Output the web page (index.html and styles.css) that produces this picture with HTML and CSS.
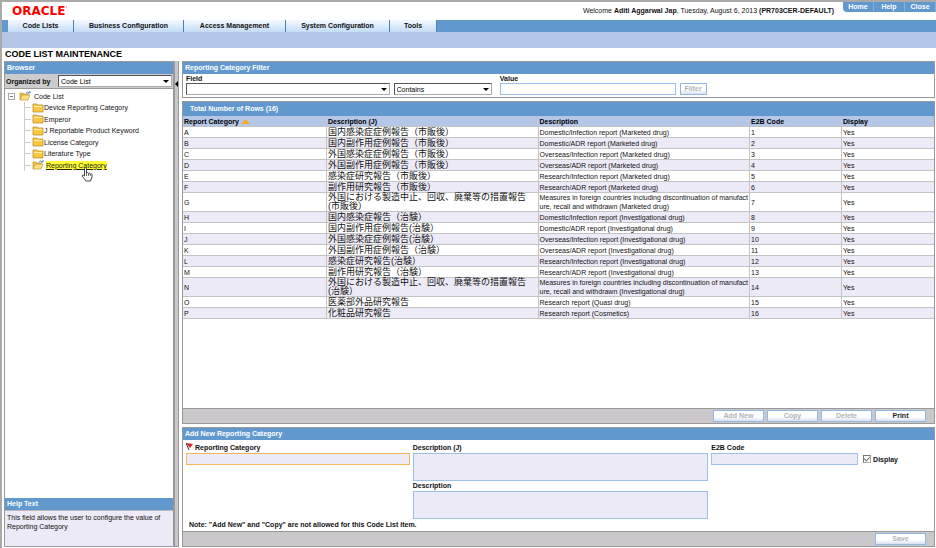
FILE: index.html
```
<!DOCTYPE html>
<html lang="en">
<head>
    <meta charset="UTF-8">
    <title>Code List Maintenance</title>
    <link rel="stylesheet" href="styles.css">
</head>
<body>
    <header class="top">
        <div class="logo">ORACLE<sup>&#39;</sup></div>
        <p class="welcome">Welcome <b>Aditi Aggarwal Jap</b>, Tuesday, August 6, 2013 <b>(PR703CER-DEFAULT)</b></p>
        <nav class="links">
            <a href="#">Home</a>
            <a href="#">Help</a>
            <a href="#">Close</a>
        </nav>
    </header>

    <nav class="menu">
        <a class="m1" href="#">Code Lists</a>
        <a class="m2" href="#">Business Configuration</a>
        <a class="m3" href="#">Access Management</a>
        <a class="m4" href="#">System Configuration</a>
        <a class="m5" href="#">Tools</a>
    </nav>
    <div class="submenu"></div>

    <h1>CODE LIST MAINTENANCE</h1>

    <div class="main">
        <aside class="browser">
            <h2>Browser</h2>
            <div class="organized">
                <label for="organized">Organized by</label>
                <span class="select"><select id="organized"><option>Code List</option></select></span>
            </div>
            <div class="tree">
                <div class="root">
                    <span class="minus"></span>
                    <svg class="folder" viewBox="0 0 12 10"><path d="M1 9V2h3l1 1h4v2" fill="#f3c04a" stroke="#b98a25" stroke-width=".6"/><path d="M1 9l2-5h8L9 9z" fill="#ffdf7e" stroke="#b98a25" stroke-width=".6"/><path d="M7 2q2-2 3 0M9 2h2V0" fill="none" stroke="#5486bd"/></svg>
                    Code List
                </div>
                <ul>
                    <li><svg class="folder" viewBox="0 0 12 10"><path d="M1 1h4l1 1h5v7H1z" fill="#fbc83f" stroke="#b5842a" stroke-width=".7"/><path d="M2 3.500h8" stroke="#fff0b0"/></svg>Device Reporting Category</li>
                    <li><svg class="folder" viewBox="0 0 12 10"><path d="M1 1h4l1 1h5v7H1z" fill="#fbc83f" stroke="#b5842a" stroke-width=".7"/><path d="M2 3.500h8" stroke="#fff0b0"/></svg>Emperor</li>
                    <li><svg class="folder" viewBox="0 0 12 10"><path d="M1 1h4l1 1h5v7H1z" fill="#fbc83f" stroke="#b5842a" stroke-width=".7"/><path d="M2 3.500h8" stroke="#fff0b0"/></svg>J Reportable Product Keyword</li>
                    <li><svg class="folder" viewBox="0 0 12 10"><path d="M1 1h4l1 1h5v7H1z" fill="#fbc83f" stroke="#b5842a" stroke-width=".7"/><path d="M2 3.500h8" stroke="#fff0b0"/></svg>License Category</li>
                    <li><svg class="folder" viewBox="0 0 12 10"><path d="M1 1h4l1 1h5v7H1z" fill="#fbc83f" stroke="#b5842a" stroke-width=".7"/><path d="M2 3.500h8" stroke="#fff0b0"/></svg>Literature Type</li>
                    <li class="current"><svg class="folder" viewBox="0 0 12 10"><path d="M1 9V2h3l1 1h4v2" fill="#f3c04a" stroke="#b98a25" stroke-width=".6"/><path d="M1 9l2-5h8L9 9z" fill="#ffdf7e" stroke="#b98a25" stroke-width=".6"/><path d="M7 2q2-2 3 0M9 2h2V0" fill="none" stroke="#5486bd"/></svg><a href="#">Reporting Category</a>
                        <svg class="hand" viewBox="0 0 12 15"><path d="M3.500 9V1.500q1-1.500 2 0V6q1-1 2 .3 1-.8 1.800.5 1.400-.5 1.700.9V10l-1.500 4H5L1.200 9.200q0-1.700 1.300-1z" fill="#fff" stroke="#333" stroke-width=".9"/><path d="M5.500 6v3M7.500 6.500V9M9.300 7v2" stroke="#333" stroke-width=".7"/></svg>
                    </li>
                </ul>
            </div>
            <h2>Help Text</h2>
            <p class="help">This field allows the user to configure the value of Reporting Category</p>
        </aside>

        <div class="splitter"></div>

        <main class="content">
            <section class="panel">
                <h2>Reporting Category Filter</h2>
                <form class="filter">
                    <label class="f-field" for="field">Field</label>
                    <label class="f-value" for="value">Value</label>
                    <span class="select"><select id="field"><option></option></select></span>
                    <span class="select condition"><select aria-label="Condition"><option>Contains</option></select></span>
                    <input type="text" id="value">
                    <button type="button" class="btn" disabled>Filter</button>
                </form>
            </section>

            <section class="panel list">
                <h2 class="total">Total Number of Rows (16)</h2>
                <table>
                    <colgroup><col class="c1"><col class="c2"><col class="c2"><col class="c4"><col class="c4"></colgroup>
                    <thead>
                        <tr><th>Report Category <svg class="sort" viewBox="0 0 9 5"><path d="M0 5l4.500-5L9 5z" fill="#f9a825"/></svg></th><th>Description (J)</th><th>Description</th><th>E2B Code</th><th>Display</th></tr>
                    </thead>
                    <tbody>
                        <tr><td>A</td><td class="jp">国内感染症症例報告（市販後）</td><td>Domestic/Infection report (Marketed drug)</td><td>1</td><td>Yes</td></tr>
                        <tr><td>B</td><td class="jp">国内副作用症例報告（市販後）</td><td>Domestic/ADR report (Marketed drug)</td><td>2</td><td>Yes</td></tr>
                        <tr><td>C</td><td class="jp">外国感染症症例報告（市販後）</td><td>Overseas/Infection report (Marketed drug)</td><td>3</td><td>Yes</td></tr>
                        <tr><td>D</td><td class="jp">外国副作用症例報告（市販後）</td><td>Overseas/ADR report (Marketed drug)</td><td>4</td><td>Yes</td></tr>
                        <tr><td>E</td><td class="jp">感染症研究報告（市販後）</td><td>Research/Infection report (Marketed drug)</td><td>5</td><td>Yes</td></tr>
                        <tr><td>F</td><td class="jp">副作用研究報告（市販後）</td><td>Research/ADR report (Marketed drug)</td><td>6</td><td>Yes</td></tr>
                        <tr><td>G</td><td class="jp">外国における製造中止、回収、廃棄等の措置報告<br>(市販後）</td><td>Measures in foreign countries including discontinuation of manufact<br>ure, recall and withdrawn (Marketed drug)</td><td>7</td><td>Yes</td></tr>
                        <tr><td>H</td><td class="jp">国内感染症報告（治験）</td><td>Domestic/Infection report (Investigational drug)</td><td>8</td><td>Yes</td></tr>
                        <tr><td>I</td><td class="jp">国内副作用症例報告(治験）</td><td>Domestic/ADR report (Investigational drug)</td><td>9</td><td>Yes</td></tr>
                        <tr><td>J</td><td class="jp">外国感染症症例報告(治験）</td><td>Overseas/Infection report (Investigational drug)</td><td>10</td><td>Yes</td></tr>
                        <tr><td>K</td><td class="jp">外国副作用症例報告（治験）</td><td>Overseas/ADR report (Investigational drug)</td><td>11</td><td>Yes</td></tr>
                        <tr><td>L</td><td class="jp">感染症研究報告(治験）</td><td>Research/Infection report (Investigational drug)</td><td>12</td><td>Yes</td></tr>
                        <tr><td>M</td><td class="jp">副作用研究報告（治験）</td><td>Research/ADR report (Investigational drug)</td><td>13</td><td>Yes</td></tr>
                        <tr><td>N</td><td class="jp">外国における製造中止、回収、廃棄等の措置報告<br>(治験）</td><td>Measures in foreign countries including discontinuation of manufact<br>ure, recall and withdrawn (Investigational drug)</td><td>14</td><td>Yes</td></tr>
                        <tr><td>O</td><td class="jp">医薬部外品研究報告</td><td>Research report (Quasi drug)</td><td>15</td><td>Yes</td></tr>
                        <tr><td>P</td><td class="jp">化粧品研究報告</td><td>Research report (Cosmetics)</td><td>16</td><td>Yes</td></tr>
                    </tbody>
                </table>
                <div class="actions">
                    <button type="button" class="btn" disabled>Add New</button>
                    <button type="button" class="btn" disabled>Copy</button>
                    <button type="button" class="btn" disabled>Delete</button>
                    <button type="button" class="btn">Print</button>
                </div>
            </section>

            <section class="panel">
                <h2>Add New Reporting Category</h2>
                <form class="edit">
                    <div class="group">
                        <label for="category"><svg class="flag" viewBox="0 0 7 7"><path d="M0 0l7 1-3 4z" fill="#d8232a"/><path d="M0 0l3 7" stroke="#333" fill="none"/></svg> Reporting Category</label>
                        <input type="text" id="category" class="required">
                    </div>
                    <div class="group">
                        <label for="descj">Description (J)</label>
                        <textarea id="descj"></textarea>
                        <label for="desc">Description</label>
                        <textarea id="desc"></textarea>
                    </div>
                    <div class="group">
                        <label for="e2b">E2B Code</label>
                        <input type="text" id="e2b">
                    </div>
                    <div class="check">
                        <input type="checkbox" id="display" checked disabled>
                        <label for="display">Display</label>
                    </div>
                </form>
                <p class="note">Note: "Add New" and "Copy" are not allowed for this Code List item.</p>
                <div class="actions">
                    <button type="button" class="btn" disabled>Save</button>
                </div>
            </section>
        </main>
    </div>
</body>
</html>
```
FILE: styles.css
```
* {
    box-sizing: border-box;
}
body {
    margin: 0;
    height: 100vh;
    display: flex;
    flex-direction: column;
    font-family: "Liberation Sans", Arial, sans-serif;
    font-size: 7px;
    line-height: 9px;
    color: #111;
    background-color: #fff;
    border-top: 2px solid #aaa;
    border-left: 2px solid #aaa;
}
p, h1, h2, ul {
    margin: 0;
    padding: 0;
}
input, select, textarea, button {
    font-family: inherit;
    font-size: 7px;
    margin: 0;
    border-radius: 0;
}

/* header */
.top {
    display: flex;
    height: 18px;
    flex-shrink: 0;
}
.logo {
    flex: 1;
    padding: 2px 0 0 10px;
    font: bold 12px/14px "DejaVu Sans", sans-serif;
    color: #f00;
}
.logo sup {
    font-size: 5px;
    line-height: 5px;
}
.welcome {
    padding: 4px 9px 0 0;
}
.links {
    display: flex;
    height: 10px;
    background-color: #6199cf;
    border-bottom-left-radius: 4px;
}
.links a {
    width: 31px;
    line-height: 10px;
    text-align: center;
    font-weight: bold;
    color: #fff;
    text-decoration: none;
    border-right: 1px solid #82b0dc;
}
.menu {
    display: flex;
    height: 12px;
    padding-left: 6px;
    flex-shrink: 0;
    background-color: #6199cf;
}
.menu a {
    line-height: 12px;
    text-align: center;
    font-weight: bold;
    color: #111;
    text-decoration: none;
    background-image: linear-gradient(#f4f9ff, #c3dcf6);
    border-right: 1px solid #4d7fb2;
}
.m1 { width: 66px; }
.m2 { width: 110px; }
.m3 { width: 102px; }
.m4 { width: 104px; }
.m5 { width: 47px; }
.submenu {
    height: 16px;
    flex-shrink: 0;
    background-color: #b5c7e7;
}
h1 {
    font-size: 9px;
    line-height: 13px;
    padding-left: 3px;
    color: #000;
}
h2 {
    height: 12px;
    padding-left: 2px;
    flex-shrink: 0;
    font-size: 7px;
    line-height: 12px;
    color: #fff;
    background-color: #6199cf;
}

/* left side */
.main {
    display: flex;
    flex: 1;
    min-height: 0;
    padding: 0 1px 1px 2px;
}
.browser {
    display: flex;
    flex-direction: column;
    width: 170px;
    border: 1px solid #999;
}
.organized {
    display: flex;
    height: 15px;
    padding: 1px;
    border-bottom: 1px solid #999;
    background-color: #ccc;
}
.organized label {
    width: 52px;
    line-height: 13px;
    font-weight: bold;
    white-space: nowrap;
}
.organized .select {
    flex: 1;
}
.select {
    position: relative;
    display: flex;
    height: 12px;
}
.select select {
    width: 100%;
    padding: 0 2px;
    appearance: none;
    background-color: #fff;
    border: 1px solid #aaa;
    border-top-color: #555;
    border-left-color: #555;
}
.select::after {
    content: "";
    position: absolute;
    right: 3px;
    top: 5px;
    border: 3px solid transparent;
    border-top-color: #000;
    border-bottom: 0;
    pointer-events: none;
}
.tree {
    flex: 1;
    padding: 1px 3px;
}
.root {
    display: flex;
    align-items: center;
    height: 12px;
}
.minus {
    width: 7px;
    height: 7px;
    margin-right: 4px;
    border: 1px solid #aaa;
    background: linear-gradient(#777, #777) center / 3px 1px no-repeat;
}
.folder {
    width: 12px;
    height: 10px;
    flex-shrink: 0;
}
.root .folder {
    margin-right: 3px;
}
.tree ul {
    display: grid;
    grid-auto-rows: 1fr;
    height: 69px;
    margin-left: 16px;
    list-style: none;
}
.tree li {
    position: relative;
    display: flex;
    align-items: center;
    padding-left: 7px;
    border-left: 1px solid #ccc;
    background: linear-gradient(#ccc, #ccc) left / 6px 1px no-repeat;
    white-space: nowrap;
}
.current .folder {
    margin-right: 2px;
}
.current a {
    color: #222;
    background-color: #ff3;
}
.hand {
    position: absolute;
    left: 56px;
    top: 7px;
    width: 12px;
    height: 15px;
}
.help {
    height: 36px;
    padding: 2px;
    border-top: 1px solid #bbb;
    background-color: #edeaf7;
}
.splitter {
    position: relative;
    width: 5px;
    margin-right: 3px;
    background-color: #c9c7c9;
    border: 1px solid #999;
    border-top: 0;
}
.splitter::after {
    content: "";
    position: absolute;
    left: 0;
    top: 20px;
    border: 3px solid transparent;
    border-right-color: #000;
    border-left: 0;
}

/* right side */
.content {
    display: flex;
    flex-direction: column;
    flex: 1;
    gap: 3px;
}
.panel {
    display: flex;
    flex-direction: column;
    border: 1px solid #999;
}
.filter {
    display: grid;
    grid-template-columns: 205fr 103fr 177fr 27px 222fr;
    grid-template-rows: 9px 12px;
    column-gap: 4px;
    height: 23px;
    padding: 0 3px;
}
.filter label {
    font-weight: bold;
}
.f-field {
    grid-column: 1 / 3;
}
.f-value {
    grid-column: 3 / 6;
}
.condition {
    margin-right: 4px;
}
.filter input, .filter .btn {
    width: 100%;
    height: 12px;
}
input, textarea {
    border: 1px solid #9cc0e8;
    outline: 0;
}
.list {
    flex: 1;
}
.total {
    padding-left: 7px;
    height: 14px;
    line-height: 14px;
}
table {
    width: 100%;
    table-layout: fixed;
    border-collapse: separate;
    border-spacing: 0;
}
.c1 { width: 144px; }
.c4 { width: 92px; }
th, td {
    height: 11px;
    padding: 0 1px;
    text-align: left;
    line-height: 9px;
    white-space: nowrap;
    border-right: 1px solid #c4c4c4;
    border-bottom: 1px solid #c4c4c4;
}
th {
    background-color: #b5c7e7;
    border-right: 0;
    color: #000;
}
td:last-child {
    border-right: 0;
}
tbody tr:nth-child(even) {
    background-color: #edeaf7;
}
.jp {
    font-family: "Liberation Sans", "Noto Sans CJK JP", sans-serif;
    font-size: 9px;
}
.sort {
    width: 9px;
    height: 5px;
}
.actions {
    display: flex;
    justify-content: flex-end;
    gap: 3px;
    height: 15px;
    margin-top: auto;
    padding: 1px 8px;
    border-top: 1px solid #999;
    background-color: #cac8ca;
}
.btn {
    width: 51px;
    height: 12px;
    padding: 0;
    font-weight: bold;
    line-height: 8px;
    color: #222;
    border: 1px solid #8fb8e2;
    background-image: linear-gradient(#fff 60%, #d9dff2);
}
.btn:disabled {
    color: #b3b3b8;
}
.edit {
    display: grid;
    grid-template-columns: 224fr 296fr 147fr 70fr;
    column-gap: 3px;
    padding: 3px 3px 0;
}
.group {
    display: flex;
    flex-direction: column;
}
.group label, .check label {
    height: 10px;
    line-height: 10px;
    font-weight: bold;
}
.group input {
    height: 12px;
    background-color: #edeaf7;
}
.group textarea {
    height: 28px;
    resize: none;
    background-color: #edeaf7;
}
.group .required {
    border-color: #f8b85a;
}
.flag {
    width: 7px;
    height: 7px;
}
.check {
    display: flex;
    gap: 2px;
    padding: 12px 0 0 2px;
}
.check input {
    width: 8px;
    height: 8px;
    appearance: none;
    border: 1px solid #aaa;
    border-top-color: #777;
    border-left-color: #777;
}
.check input:checked::before {
    content: "";
    display: block;
    width: 5px;
    height: 3px;
    border: solid #777;
    border-width: 0 0 1px 1px;
    transform: rotate(-45deg);
}
.note {
    padding: 0 6px;
    line-height: 12px;
    font-weight: bold;
}
```
